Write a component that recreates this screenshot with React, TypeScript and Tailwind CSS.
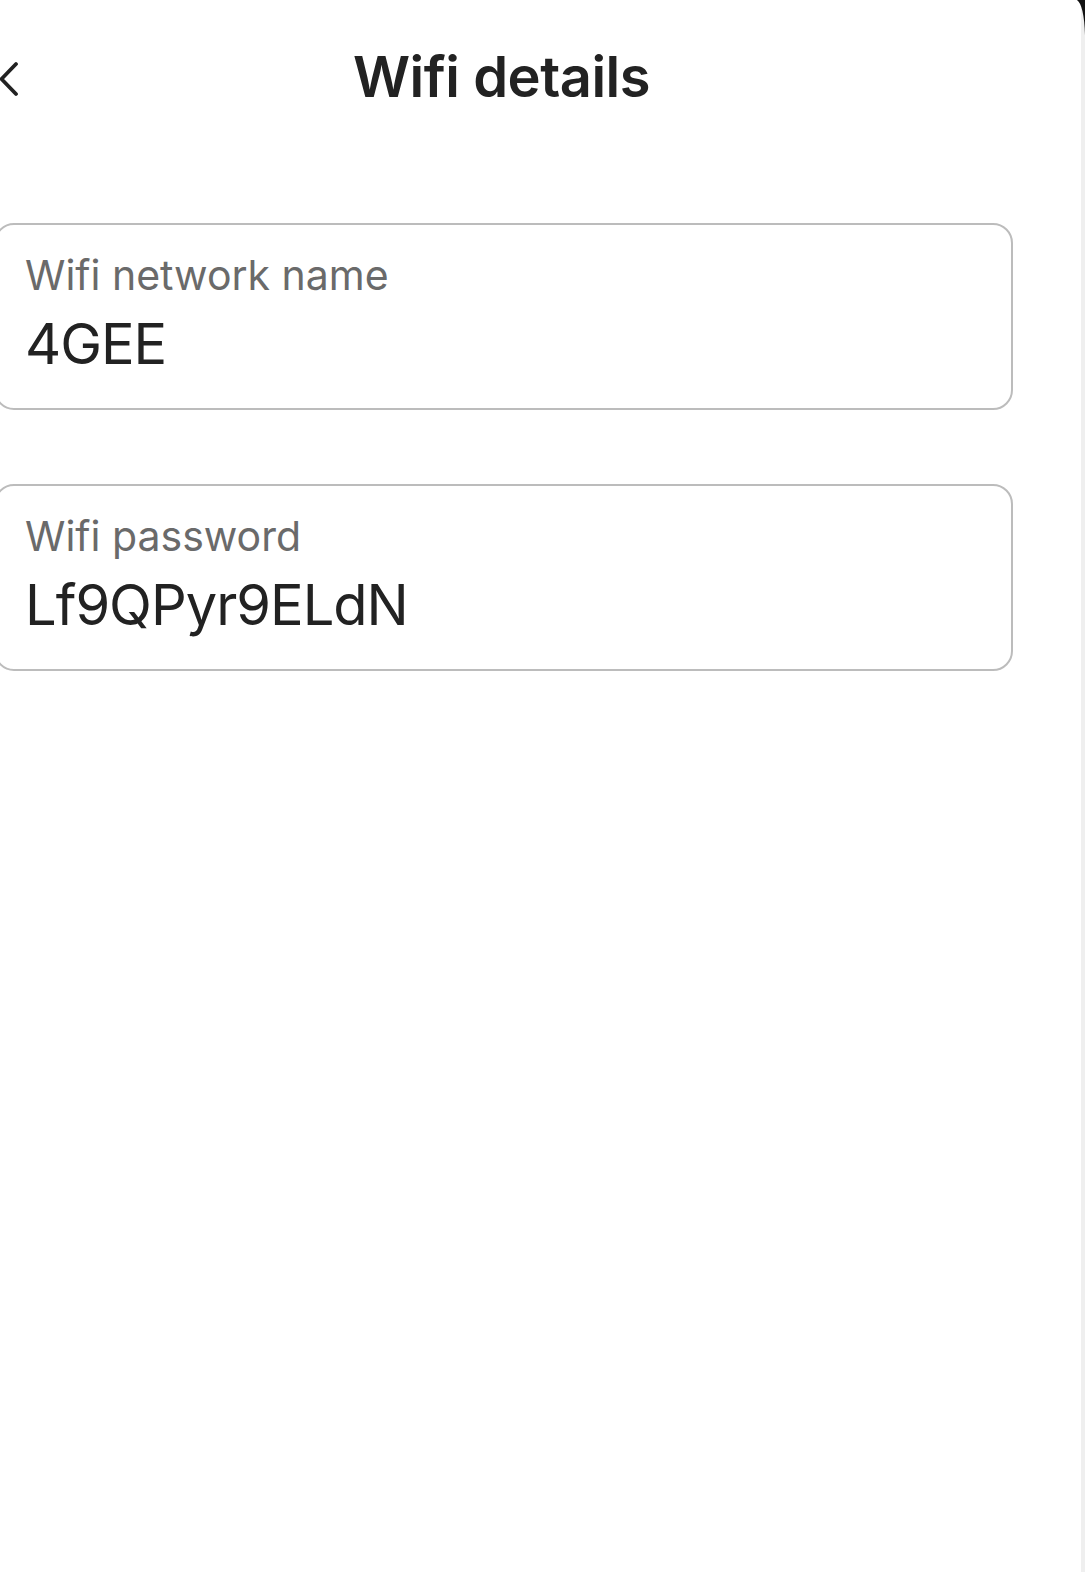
type FieldProps = {
  label: string;
  value: string;
};

const Field = ({ label, value }: FieldProps) => {
  return (
    <div className="ml-[-6px] w-[1019px] rounded-[20px] border-2 border-[#bcbcbc] pb-[36px] pl-[29px] pt-[30px]">
      <p className="text-[41px] leading-[41px] text-[#6a6a6a]">{label}</p>
      <p className="mt-[20px] text-[56px] leading-[56px] tracking-[-1px] text-[#222222]">
        {value}
      </p>
    </div>
  );
};

export default function App() {
  return (
    <div
      className="relative flex h-[1572px] w-full bg-white"
      style={{ fontFamily: "Inter, 'Noto Sans', sans-serif" }}
    >
      <div className="flex flex-1 flex-col">
        <header className="flex h-[153px] items-start pt-[49px]">
          <svg
            className="mt-[12px] shrink-0"
            width="20"
            height="36"
            viewBox="0 0 20 36"
            fill="none"
          >
            <polyline
              points="16,3 1.5,18 16,33"
              stroke="#222222"
              strokeWidth="3.8"
              strokeLinecap="round"
              strokeLinejoin="round"
            />
          </svg>
          <h1 className="ml-[333px] text-[56px] font-semibold leading-[56px] tracking-[-0.5px] text-[#222222]">
            Wifi details
          </h1>
        </header>

        <div className="mt-[70px] flex flex-col gap-[74px]">
          <Field label="Wifi network name" value="4GEE" />
          <Field label="Wifi password" value="Lf9QPyr9ELdN" />
        </div>
      </div>

      <div className="w-[4px] bg-[#efefef]" />

      {/* device bezel corner */}
      <svg
        className="absolute right-0 top-0"
        width="8"
        height="36"
        viewBox="0 0 8 36"
      >
        <path d="M0 0 H8 V35 Q7 5 0 0 Z" fill="#111" />
      </svg>
    </div>
  );
}
